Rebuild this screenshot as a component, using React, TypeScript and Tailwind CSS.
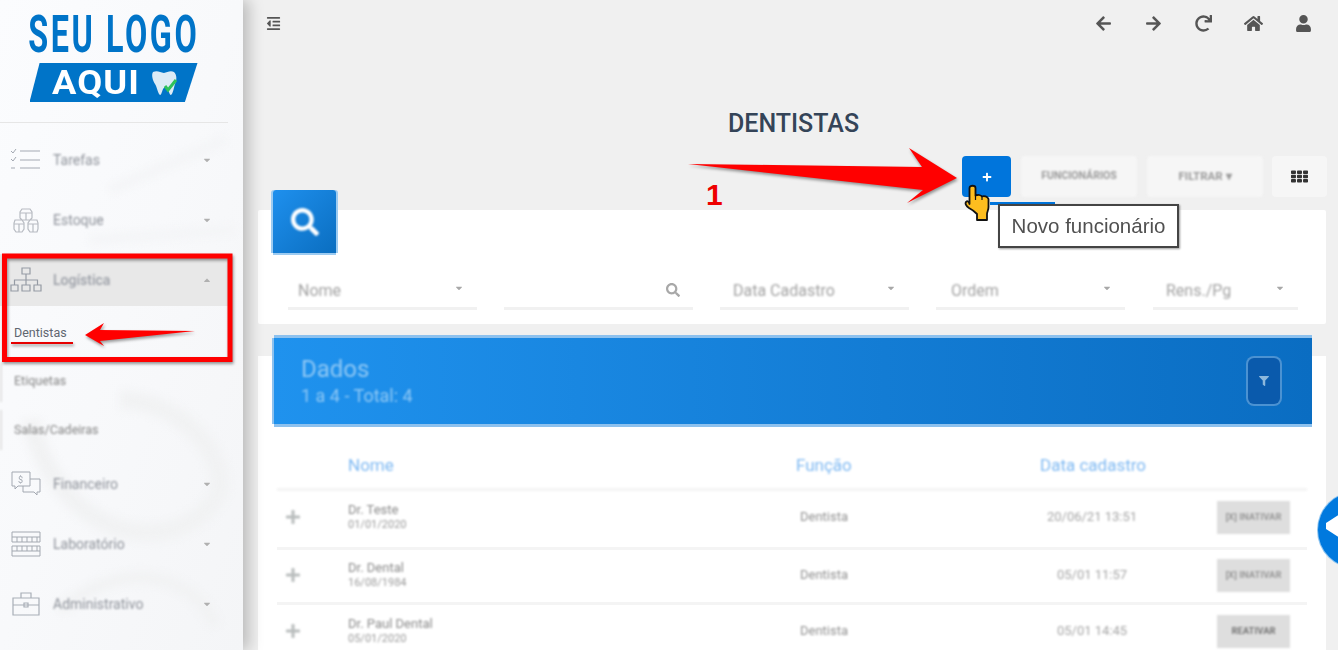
import React from "react";
import { FaArrowLeft, FaArrowRight, FaRedo, FaHome, FaUser, FaPlus, FaSearch, FaOutdent, FaTh, FaFilter, FaCaretDown, FaCaretUp } from "react-icons/fa";

const font = "font-['Roboto','Liberation_Sans',sans-serif]";

function TasksIcon() {
  return (
    <svg width="32" height="24" viewBox="0 0 32 24" fill="none" stroke="#9aa0aa" strokeWidth="1">
      <path d="M1 3l2 2 3-4M1 11l2 2 3-4M1 20h4M10 3h20M10 12h20M10 20h20" />
    </svg>
  );
}
function BoxesIcon() {
  return (
    <svg width="26" height="26" viewBox="0 0 26 26" fill="none" stroke="#b0b4bb" strokeWidth="1.2">
      <path d="M9 2h8l2 3v6l-2 2H9l-2-2V5zM2 13h7l2 3v6l-2 3H3l-2-3v-6zM17 13h7l1 3v6l-1 3h-7l-2-3v-6zM7 6h12M1 17h10M15 17h10M13 6v7M6 17v8M20 17v8" />
    </svg>
  );
}
function OrgIcon() {
  return (
    <svg width="32" height="26" viewBox="0 0 32 26" fill="none" stroke="#8d939d" strokeWidth="1.2">
      <path d="M12 1h8v6h-8zM1 18h7v6H1zM12 18h8v6h-8zM24 18h7v6h-7zM16 7v11M4.5 18v-5h23v5" />
    </svg>
  );
}
function MoneyIcon() {
  return (
    <svg width="32" height="26" viewBox="0 0 32 26" fill="none" stroke="#9aa0aa" strokeWidth="1">
      <path d="M2 1h18v14H8l-3 3v-3H2zM20 8h10v13h-3v3l-3-3H13v-6" />
      <text x="8" y="12" fontSize="9" fill="#9aa0aa" stroke="none">$</text>
    </svg>
  );
}
function DentureIcon() {
  return (
    <svg width="32" height="26" viewBox="0 0 32 26" fill="none" stroke="#9aa0aa" strokeWidth="1">
      <path d="M2 1h28v10H2zM2 15h28v10H2zM2 6h28M2 20h28M7 6v5M12 6v5M17 6v5M22 6v5M27 6v5M7 15v5M12 15v5M17 15v5M22 15v5M27 15v5" />
    </svg>
  );
}
function CaseIcon() {
  return (
    <svg width="28" height="24" viewBox="0 0 28 24" fill="none" stroke="#a0a6b0" strokeWidth="1.2">
      <path d="M1 6h26v17H1zM9 6V1h10v5M1 13h26M12 11h4v4h-4z" />
    </svg>
  );
}

function MenuRow({ icon, label, open }: { icon: React.ReactNode; label: string; open?: boolean }) {
  return (
    <div className={`flex items-center w-[228px] pl-[8px] pr-[16px] ${open ? "bg-[#e8e8e8] h-[52px] my-[4px]" : "h-[60px]"}`}>
      <div className="w-[44px] flex justify-center -ml-[4px] mr-[5px] opacity-90 blur-[0.6px]">{icon}</div>
      <span className={`flex-1 text-[14px] blur-[0.8px] ${open ? "text-[#9a9ea6] font-medium" : "text-[#8f939b]"}`}>{label}</span>
      {open ? <FaCaretUp className="text-[#b0b0b0] text-[10px] blur-[0.4px]" /> : <FaCaretDown className="text-[#b0b0b0] text-[10px] blur-[0.4px]" />}
    </div>
  );
}

function FilterField({ label, pad, wide, icon }: { label?: string; pad: string; wide?: boolean; icon: React.ReactNode }) {
  return (
    <div className={`${wide ? "w-[145px] ml-[1px]" : "w-[189px]"} h-[30px] border-b-[3px] border-[#f1f1f1] flex items-start justify-between ${pad} pr-[13px]`}>
      <span className="text-[16px] leading-[20px] text-[#a2a2a2] blur-[1.1px] mt-[1px]">{label}</span>
      <span className="text-[#a8a8a8] text-[10px] mt-[3px] blur-[0.7px]">{icon}</span>
    </div>
  );
}

function Row({ name, date, when, role, btn, h, dark }: { name: string; date: string; when: string; role: string; btn: string; h: string; dark?: boolean }) {
  return (
    <div className={`flex items-center w-[1030px] border-b-[3px] border-[#f4f4f4] ${h}`}>
      <FaPlus className="text-[#b9bdbd] text-[16px] blur-[1px] ml-[8px] w-[16px]" />
      <div className="ml-[47px] w-[452px] leading-[15px] blur-[1.2px]">
        <div className="text-[13px] text-[#8a8a8a]">{name}</div>
        <div className="text-[11px] text-[#9a9a9a]">{date}</div>
      </div>
      <div className="w-[219px] text-[13px] text-[#919191] blur-[1.2px]">{role}</div>
      <div className="w-[146px] text-center text-[13px] text-[#a5a5a5] blur-[1.2px]">{when}</div>
      <div className={`ml-[52px] w-[73px] h-[33px] bg-[#dedede] flex items-center justify-center text-[9.5px] font-bold blur-[0.9px] ${dark ? "text-[#777]" : "text-[#999]"}`}>{btn}</div>
    </div>
  );
}

export default function App() {
  return (
    <div className={`${font} relative flex w-[1338px] h-[650px] overflow-hidden bg-[#f0f0f0]`}>
      {/* Sidebar */}
      <aside className="relative w-[243px] shrink-0 h-full bg-gradient-to-br from-[#fbfcfe] via-[#f8f9fb] to-[#f4f5f7] shadow-[6px_0_14px_rgba(0,0,0,0.22)] z-10">
        <svg className="absolute inset-0 blur-[4px]" width="243" height="650" viewBox="0 0 243 650" fill="none">
          <path d="M30 420 C60 540 170 560 215 500 C235 470 190 400 120 400" stroke="#f1f2f3" strokeWidth="18" />
          <path d="M60 610 C120 560 190 570 215 625" stroke="#f1f2f3" strokeWidth="12" />
          <path d="M110 190 L225 140 M90 240 L235 230" stroke="#f3f4f6" strokeWidth="8" />
        </svg>
        <div className="relative">
          <div className="flex flex-col items-center w-[228px] h-[123px] border-b border-[#e6e6e6] pt-[13px]">
            <div className="text-[#0074c8] text-[51px] leading-[44px] font-bold tracking-[4px] font-['Liberation_Sans_Narrow','Roboto',sans-serif] scale-x-[0.635] whitespace-nowrap">SEU LOGO</div>
            <div className="mt-[6px] ml-[-1px] w-[168px] h-[39px] bg-[#0074c8] [clip-path:polygon(6%_0,100%_0,92.5%_100%,0_100%)] flex items-center pl-[22px] text-white">
              <span className="w-[98px] text-[33px] font-bold leading-none tracking-[1px] origin-left scale-x-[1.1]">AQUI</span>
              <svg width="28" height="26" viewBox="0 0 28 26">
                <path d="M3 2c4-2 7 0 11 1 3-1 7-3 10-1 3 3 3 8 1 12-1 3-2 10-4 11-2 0-2-7-6-8-3 1-3 8-5 8C8 24 7 17 5 14 3 11 1 5 3 2z" fill="#dcebf6" />
                <path d="M15 16l3 4 8-10" fill="none" stroke="#2fc25b" strokeWidth="3" />
              </svg>
            </div>
          </div>
          <div className="mt-[7px]">
            <MenuRow icon={<TasksIcon />} label="Tarefas" />
            <MenuRow icon={<BoxesIcon />} label="Estoque" />
            <MenuRow icon={<OrgIcon />} label="Logística" open />
            <div className="text-[12.5px]">
              <div className="h-[48px] pl-[14px] pt-[14px] text-[#5f6670]">Dentistas</div>
              <div className="h-[39px] mt-[5px] pl-[12px] pt-[9px] border-l-2 border-[#e2e2e2] blur-[0.8px] text-[#858585]">Etiquetas</div>
              <div className="h-[40px] mt-[8px] mb-[4px] pl-[12px] pt-[11px] border-l-2 border-[#e2e2e2] blur-[0.8px] text-[#858585]">Salas/Cadeiras</div>
            </div>
            <MenuRow icon={<MoneyIcon />} label="Financeiro" />
            <MenuRow icon={<DentureIcon />} label="Laboratório" />
            <MenuRow icon={<CaseIcon />} label="Administrativo" />
          </div>
        </div>
      </aside>

      {/* Main */}
      <main className="flex-1 min-w-0 flex flex-col relative">
        <header className="h-[46px] shrink-0 flex items-center justify-between pl-[23px] pr-[10px] text-[#555]">
          <FaOutdent className="text-[15px]" />
          <div className="flex items-center text-[17px]">
            <div className="w-[50px] flex justify-center"><FaArrowLeft /></div>
            <div className="w-[50px] flex justify-center"><FaArrowRight /></div>
            <div className="w-[50px] flex justify-center"><FaRedo /></div>
            <div className="w-[50px] flex justify-center"><FaHome className="text-[19px]" /></div>
            <div className="w-[50px] flex justify-center"><FaUser /></div>
          </div>
        </header>
        <h1 className="shrink-0 text-center text-[25px] leading-[28px] font-medium text-[#344458] mt-[64px] pl-[6px]">DENTISTAS</h1>
        <div className="shrink-0 flex items-start mt-[18px] ml-[719px] h-[41px] text-[#9a9a9a] font-bold">
          <div className="w-[49px] h-[41px] rounded-[4px] bg-[#0075dc] flex items-center justify-center text-white"><FaPlus className="text-[10px]" /></div>
          <div className="w-[116px] h-[41px] ml-[10px] rounded-[4px] bg-[#f6f6f6] flex items-center justify-center blur-[0.8px] pb-[2px] text-[10.5px]">FUNCIONÁRIOS</div>
          <div className="w-[116px] h-[41px] ml-[10px] rounded-[4px] bg-[#f6f6f6] flex items-center justify-center blur-[0.8px] text-[11.5px]">FILTRAR ▾</div>
          <div className="w-[55px] h-[41px] ml-[9px] rounded-[4px] bg-[#f6f6f6] flex items-center justify-center"><FaTh className="text-[#333] text-[17px] scale-y-[0.8]" /></div>
        </div>

        {/* Filter card */}
        <section className="shrink-0 relative ml-[15px] w-[1068px] h-[114px] mt-[13px] bg-white rounded-[2px]">
          <div className="absolute left-[15px] -top-[20px] w-[63px] h-[63px] rounded-t-[3px] bg-gradient-to-br from-[#1e90ee] to-[#0a6ec0] shadow-[0_2px_0_#9ccbf1,-2px_0_0_#9ccbf1,2px_0_0_#9ccbf1] flex items-center justify-center">
            <FaSearch className="text-white text-[28px] blur-[0.8px]" />
          </div>
          <div className="flex gap-[27px] pl-[30px] pt-[70px]">
            <FilterField label="Nome" pad="pl-[10px]" icon={<FaCaretDown />} />
            <FilterField pad="pl-[10px]" icon={<FaSearch className="text-[14px] -ml-[2px]" />} />
            <FilterField label="Data Cadastro" pad="pl-[13px]" icon={<FaCaretDown />} />
            <FilterField label="Ordem" pad="pl-[15px]" icon={<FaCaretDown />} />
            <FilterField label="Rens./Pg" pad="pl-[13px]" wide icon={<FaCaretDown />} />
          </div>
        </section>

        {/* Data card */}
        <section className="shrink-0 relative ml-[15px] w-[1068px] h-[294px] mt-[32px] bg-white">
          <div className="absolute left-[16px] -top-[18px] w-[1038px] h-[86px] bg-gradient-to-r from-[#1f92ee] to-[#0a6dc2] shadow-[0_-3px_0_#8dc1ee,0_3px_0_#8dc1ee,-2px_0_0_#8dc1ee] flex items-center justify-between pl-[27px] pr-[32px]">
            <div className="blur-[1px] text-[#8fc8f5]">
              <div className="text-[24px] leading-[30px]">Dados</div>
              <div className="text-[18px] leading-[24px]">1 a 4 - Total: 4</div>
            </div>
            <div className="w-[32px] h-[46px] rounded-[6px] bg-[#0a5aac] ring-2 ring-[#4b92d2] flex items-center justify-center text-[#8db8dc] text-[10px] blur-[0.6px]">
              <FaFilter />
            </div>
          </div>
          <div className="pt-[71px] ml-[19px]">
            <div className="flex items-center h-[64px] w-[1030px] border-b-[3px] border-[#f4f4f4] text-[17px] text-[#7fb9f2] blur-[1.1px] pt-[16px]">
              <span className="ml-[71px] w-[448px]">Nome</span>
              <span className="w-[244px]">Função</span>
              <span>Data cadastro</span>
            </div>
            <Row name="Dr. Teste" date="01/01/2020" role="Dentista" when="20/06/21 13:51" btn="[X] INATIVAR" h="h-[59px] pb-[4px]" />
            <Row name="Dr. Dental" date="16/08/1984" role="Dentista" when="05/01 11:57" btn="[X] INATIVAR" h="h-[55px] pb-[2px]" />
            <Row name="Dr. Paul Dental" date="05/01/2020" role="Dentista" when="05/01 14:45" btn="REATIVAR" h="h-[55px]" dark />
          </div>
        </section>
      </main>

      {/* Annotations */}
      <div className="absolute left-[1318px] top-[492px] w-[76px] h-[76px] rounded-full bg-[#0079de] shadow-[0_0_0_1px_#8cc4f0] z-10 flex items-center pl-[8px] pb-[8px] blur-[0.5px]">
        <svg width="14" height="26" viewBox="0 0 14 26">
          <path d="M0 10 L14 1 V25 L0 16 Z" fill="#ffffff" />
        </svg>
      </div>

      <div className="absolute left-[990px] top-[202px] w-[65px] h-[3px] bg-[#0075dc] z-10" />

      <svg className="absolute inset-0 z-20 pointer-events-none drop-shadow-[1px_2px_1.5px_rgba(0,0,0,0.4)]" width="1338" height="650" viewBox="0 0 1338 650">
        <path d="M4.5 256 H230 V359.5 H4.5 Z" fill="none" stroke="#ff0000" strokeWidth="5" />
        <path d="M85 335 L104 323 L100 330 L195 331 L100 341 L104 346 Z" fill="#ff0000" />
        <path d="M11 343 H73" stroke="#e60000" strokeWidth="2" />
        <path d="M688 164 L922 167 L909 148 L957 178 L907 203 L923 190 Z" fill="#ff0000" />
      </svg>
      <div className="absolute left-[706px] top-[178px] z-20 text-[30px] leading-[34px] font-bold text-[#ee0000] font-['Liberation_Sans',sans-serif]">1</div>

      <svg className="absolute left-[964px] top-[184px] z-30" width="26" height="38" viewBox="0 0 26 38">
        <path d="M5.5 4 C5.5 1 11.5 1 11.5 4 V11.5 C14 10.5 17 11 18 12.5 C20 11.5 23.5 12.5 24.5 15 V23 C24.5 26 23 28 23 30 V36 H13 V30 C11 28 9 26 5 24 C2 22 0.5 19 2.5 17.5 C3.5 16.5 5 18 5.5 20 Z" fill="#fdbd1f" stroke="#111" strokeWidth="1.8" strokeLinejoin="round" />
        <path d="M11.5 11.5 V16 M18 12.5 V16" stroke="#111" strokeWidth="1.2" fill="none" />
      </svg>

      <div className="absolute left-[998px] top-[204px] z-20 w-[181px] h-[44px] bg-white border-2 border-[#444] shadow-[1px_1px_2px_rgba(0,0,0,0.4)] flex items-center justify-center text-[20.5px] text-[#505050] font-['Liberation_Sans',sans-serif] blur-[0.3px]">
        Novo funcionário
      </div>
    </div>
  );
}
